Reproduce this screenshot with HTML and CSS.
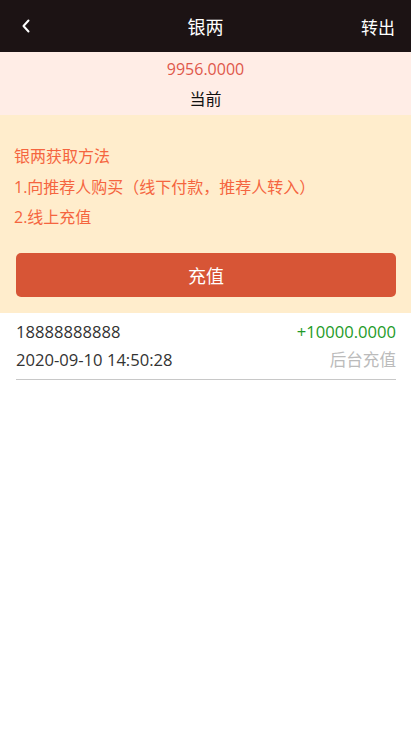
FILE: index.html
```html
<!DOCTYPE html>
<html lang="zh-CN">
<head>
<meta charset="utf-8">
<meta name="viewport" content="width=device-width, initial-scale=1">
<title>银两</title>
<link rel="stylesheet" href="styles.css">
</head>
<body>
<header class="topbar">
  <span class="back">
    <svg width="10" height="14" viewBox="0 0 10 14"><path d="M7.5 1.5 L2.5 7 L7.5 12.5" fill="none" stroke="#fff" stroke-width="2" stroke-linecap="round" stroke-linejoin="round"/></svg>
  </span>
  <h1 class="title">银两</h1>
  <span class="action">转出</span>
</header>
<section class="balance">
  <div class="amount">9956.0000</div>
  <div class="label">当前</div>
</section>
<section class="info">
  <div class="lines">
    <p>银两获取方法</p>
    <p>1.向推荐人购买（线下付款，推荐人转入）</p>
    <p>2.线上充值</p>
  </div>
  <button class="btn">充值</button>
</section>
<ul class="records">
  <li class="record">
    <div class="row"><span class="who">18888888888</span><span class="plus">+10000.0000</span></div>
    <div class="row"><span class="time">2020-09-10 14:50:28</span><span class="type">后台充值</span></div>
  </li>
</ul>
</body>
</html>
```
FILE: styles.css
```css
* { box-sizing: border-box; }
html, body { margin: 0; padding: 0; background: #fff; }
body {
  font-family: "Open Sans", "Noto Sans CJK SC", sans-serif;
  font-size: 16px;
  color: #333;
}
.topbar {
  height: 52px;
  background: #1c1314;
  display: flex;
  align-items: center;
  justify-content: space-between;
  padding: 0 16px 0 21px;
  position: relative;
}
.back { display: flex; align-items: center; width: 12px; }
.title {
  margin: 0;
  font-size: 18px;
  font-weight: normal;
  color: #fff;
  position: absolute;
  left: 0; right: 0;
  text-align: center;
  pointer-events: none;
}
.action { color: #fff; font-size: 17px; }
.balance {
  background: #ffede6;
  height: 63px;
  padding-top: 2px;
  text-align: center;
}
.amount { color: #e0584b; line-height: 30px; }
.label { color: #111; line-height: 30px; font-size: 16px; }
.info {
  background: #ffedcc;
  padding: 26px 15px 16px 16px;
}
.lines p {
  margin: 0;
  line-height: 30.5px;
  color: #f5653f;
  font-size: 16px;
  margin-left: -2px;
}
.btn {
  display: block;
  width: 100%;
  height: 44px;
  margin-top: 20px;
  border: none;
  border-radius: 5px;
  background: #d75536;
  color: #fff;
  font-family: inherit;
  font-size: 18px;
}
.records { list-style: none; margin: 0; padding: 0 15px 0 16px; }
.record {
  padding: 5px 0 5px;
  border-bottom: 1px solid #c8c8c8;
}
.row {
  display: flex;
  justify-content: space-between;
  line-height: 28px;
  font-size: 16.6px;
}
.who { color: #333; }
.plus { color: #1e9b28; }
.time { color: #333; }
.type { color: #bbb; }
```
